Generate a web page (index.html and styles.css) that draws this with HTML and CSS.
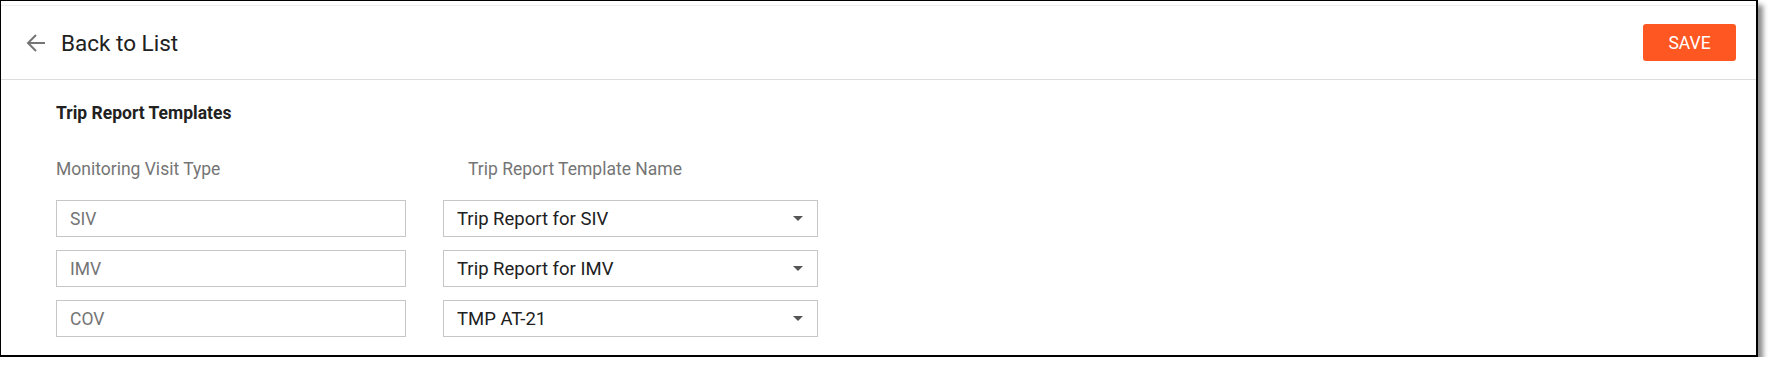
FILE: index.html
```html
<!DOCTYPE html>
<html lang="en">
<head>
    <meta charset="UTF-8">
    <meta name="viewport" content="width=device-width, initial-scale=1.0">
    <title>Trip Report Templates</title>
    <link rel="stylesheet" href="styles.css">
</head>
<body>
    <div class="window">
        <div class="header">
            <a class="back" href="#">
                <svg class="back-icon" width="20" height="20" viewBox="0 0 20 20">
                    <path d="M19 10H2M10 2L2 10L10 18" fill="none" stroke="#757575" stroke-width="2"/>
                </svg>
                <span>Back to List</span>
            </a>
            <button class="save">SAVE</button>
        </div>

        <div class="content">
            <h3 class="title">Trip Report Templates</h3>

            <div class="grid">
                <div class="label">Monitoring Visit Type</div>
                <div class="label label-template">Trip Report Template Name</div>

                <div class="field">SIV</div>
                <div class="select">
                    <span>Trip Report for SIV</span>
                    <i class="caret"></i>
                </div>

                <div class="field">IMV</div>
                <div class="select">
                    <span>Trip Report for IMV</span>
                    <i class="caret"></i>
                </div>

                <div class="field">COV</div>
                <div class="select">
                    <span>TMP AT-21</span>
                    <i class="caret"></i>
                </div>
            </div>
        </div>
    </div>
</body>
</html>
```

FILE: styles.css
```css
* {
    box-sizing: border-box;
}

body {
    margin: 0;
    background-color: #fff;
    font-family: Roboto, "Liberation Sans", sans-serif;
    color: #212121;
}

.window {
    width: 1758px;
    height: 357px;
    border: 1px solid #000;
    border-width: 1px 2px 2px 1px;
    box-shadow: 5px 5px 5px rgba(0, 0, 0, 0.45);
    background-color: #fff;
}

.header {
    margin-top: 4px;
    height: 75px;
    border-top: 1px solid #eeeeee;
    border-bottom: 1px solid #dddddd;
    display: flex;
    align-items: center;
    justify-content: space-between;
    padding: 0 20px 0 25px;
}

.back {
    display: flex;
    align-items: center;
    text-decoration: none;
    color: #212121;
    font-size: 22.5px;
}

.back-icon {
    margin-right: 15px;
}

.save {
    width: 93px;
    height: 37px;
    border: 0;
    border-radius: 3px;
    background-color: #ff5722;
    color: #fff;
    font-family: Roboto, sans-serif;
    font-size: 17.5px;
    padding: 0;
}

.content {
    padding: 0 55px;
}

.title {
    margin: 23px 0 0;
    font-size: 17.5px;
    line-height: 20px;
    font-weight: 700;
}

.grid {
    display: grid;
    grid-template-columns: 350px 375px;
    column-gap: 37px;
    row-gap: 13px;
    margin-top: 36px;
}

.label {
    font-size: 17.5px;
    line-height: 20px;
    color: #757575;
    margin-bottom: 8px;
}

.label-template {
    padding-left: 25px;
}

.field,
.select {
    height: 37px;
    border: 1px solid #c6c6c6;
    display: flex;
    align-items: center;
}

.field {
    padding-left: 13px;
    font-size: 17.5px;
    color: #757575;
}

.select {
    padding: 0 14px 0 13px;
    justify-content: space-between;
    font-size: 18.5px;
    color: #212121;
}

.caret {
    width: 0;
    height: 0;
    border-left: 5px solid transparent;
    border-right: 5px solid transparent;
    border-top: 5px solid #555;
}
```
